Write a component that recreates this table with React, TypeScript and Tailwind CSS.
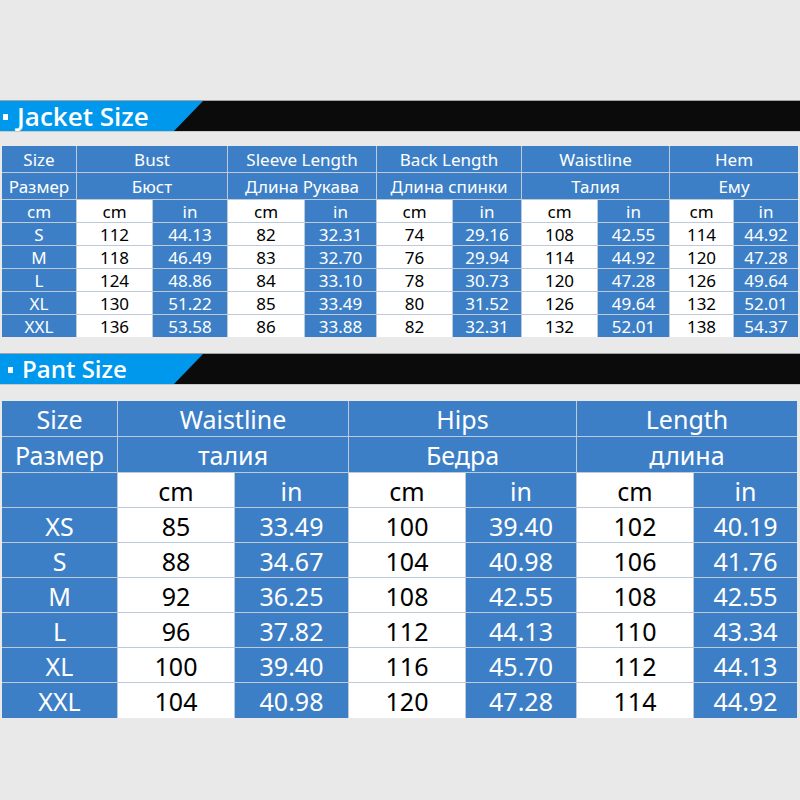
import React from "react";

const jacketRows = [
  ["S", "112", "44.13", "82", "32.31", "74", "29.16", "108", "42.55", "114", "44.92"],
  ["M", "118", "46.49", "83", "32.70", "76", "29.94", "114", "44.92", "120", "47.28"],
  ["L", "124", "48.86", "84", "33.10", "78", "30.73", "120", "47.28", "126", "49.64"],
  ["XL", "130", "51.22", "85", "33.49", "80", "31.52", "126", "49.64", "132", "52.01"],
  ["XXL", "136", "53.58", "86", "33.88", "82", "32.31", "132", "52.01", "138", "54.37"],
];

const jacketHead = [
  ["Bust", "Бюст"],
  ["Sleeve Length", "Длина Рукава"],
  ["Back Length", "Длина спинки"],
  ["Waistline", "Талия"],
  ["Hem", "Ему"],
];

const pantRows = [
  ["XS", "85", "33.49", "100", "39.40", "102", "40.19"],
  ["S", "88", "34.67", "104", "40.98", "106", "41.76"],
  ["M", "92", "36.25", "108", "42.55", "108", "42.55"],
  ["L", "96", "37.82", "112", "44.13", "110", "43.34"],
  ["XL", "100", "39.40", "116", "45.70", "112", "44.13"],
  ["XXL", "104", "40.98", "120", "47.28", "114", "44.92"],
];

const pantHead = [
  ["Waistline", "талия"],
  ["Hips", "Бедра"],
  ["Length", "длина"],
];

function Banner({ title, pad }: { title: string; pad: string }) {
  return (
    <div className="border-t border-[#a3a3a3] border-b border-b-[#c9c9c9]">
      <div className="h-[30px] bg-[#0b0b0b] flex">
        <div
          className={`w-[203px] h-full bg-[#0098ec] flex items-center ${pad} [clip-path:polygon(0_0,100%_0,174px_100%,0_100%)]`}
        >
          <span className="w-[5px] h-[6px] bg-white mr-[9px] mt-[2px]" />
          <span className="text-white font-semibold font-['Open_Sans',sans-serif] leading-none">
            {title}
          </span>
        </div>
      </div>
    </div>
  );
}

function Cell({
  children,
  white,
  className = "",
}: {
  children?: React.ReactNode;
  white?: boolean;
  className?: string;
}) {
  return (
    <div
      className={`flex items-center justify-center whitespace-nowrap ${
        white ? "bg-white text-black" : "bg-[#3d7fc6] text-white"
      } ${className}`}
    >
      {children}
    </div>
  );
}

function JacketTable() {
  return (
    <div className="ml-[2px] w-[796px] grid grid-cols-[74px_75px_74px_76px_71px_75px_68px_75px_71px_63px_64px] grid-rows-[26px_26px_22px_22px_22px_22px_22px_22px] gap-px bg-[#bfcad8] font-['Noto_Sans',sans-serif] text-[17px] [&>div]:pt-px">
      <Cell>Size</Cell>
      {jacketHead.map(([en]) => (
        <Cell key={en} className="col-span-2">
          {en}
        </Cell>
      ))}
      <Cell>Размер</Cell>
      {jacketHead.map(([en, ru]) => (
        <Cell key={en + "ru"} className="col-span-2">
          {ru}
        </Cell>
      ))}
      <Cell>cm</Cell>
      {jacketHead.map(([en]) => (
        <React.Fragment key={en + "unit"}>
          <Cell white>cm</Cell>
          <Cell>in</Cell>
        </React.Fragment>
      ))}
      {jacketRows.map((row) =>
        row.map((v, i) => (
          <Cell key={row[0] + i} white={i > 0 && i % 2 === 1}>
            {v}
          </Cell>
        ))
      )}
    </div>
  );
}

function PantTable() {
  return (
    <div className="ml-[2px] w-[795px] grid grid-cols-[115px_116px_113px_116px_110px_116px_103px] grid-rows-[35px_35px_34px_34px_34px_34px_34px_34px_35px] gap-px bg-[#bfcad8] font-['Noto_Sans',sans-serif] text-[25px] [&>div]:pt-[3px]">
      <Cell>Size</Cell>
      {pantHead.map(([en]) => (
        <Cell key={en} className="col-span-2">
          {en}
        </Cell>
      ))}
      <Cell>Размер</Cell>
      {pantHead.map(([en, ru]) => (
        <Cell key={en + "ru"} className="col-span-2">
          {ru}
        </Cell>
      ))}
      <Cell />
      {pantHead.map(([en]) => (
        <React.Fragment key={en + "unit"}>
          <Cell white>cm</Cell>
          <Cell>in</Cell>
        </React.Fragment>
      ))}
      {pantRows.map((row) =>
        row.map((v, i) => (
          <Cell key={row[0] + i} white={i > 0 && i % 2 === 1}>
            {v}
          </Cell>
        ))
      )}
    </div>
  );
}

export default function App() {
  return (
    <div className="w-[800px] h-[800px] bg-[#e9e9e9] pt-[100px] overflow-hidden">
      <div className="text-[26px]">
        <Banner title="Jacket Size" pad="pl-[3px]" />
      </div>
      <div className="mt-[14px]">
        <JacketTable />
      </div>
      <div className="mt-[16px] text-[24px]">
        <Banner title="Pant Size" pad="pl-[8px]" />
      </div>
      <div className="mt-[16px]">
        <PantTable />
      </div>
    </div>
  );
}
